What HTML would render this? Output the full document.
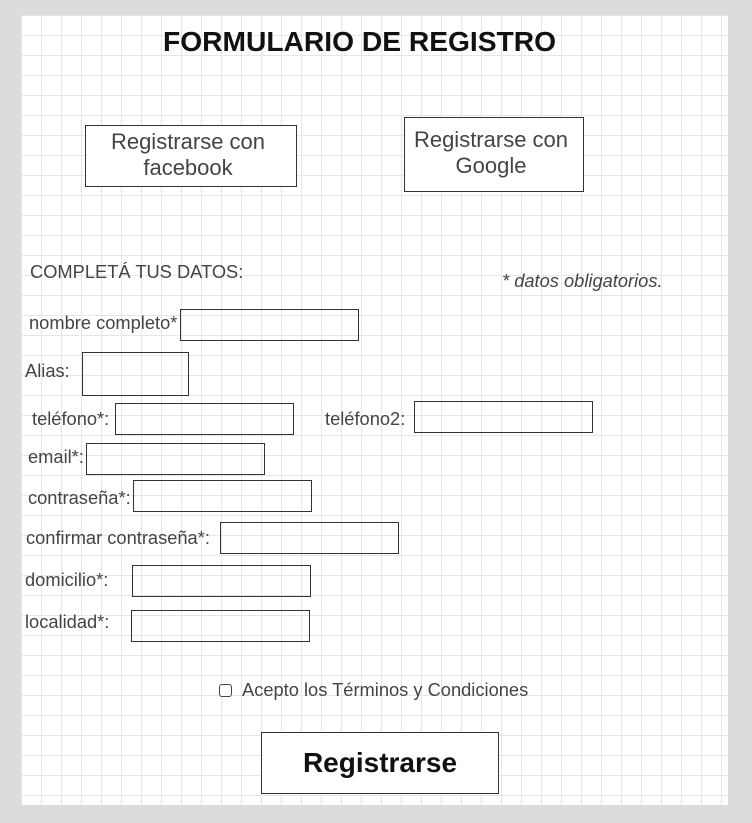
<!DOCTYPE html>
<html><head><meta charset="utf-8"><style>
body{margin:0;width:752px;height:823px;background:#dcdcdc;position:relative;overflow:hidden;font-family:"Liberation Sans",sans-serif;color:#444}
#p{position:absolute;left:21px;top:15px;width:707px;height:790px;background-color:#fff;
background-image:linear-gradient(to right,#e6e6e6 1px,transparent 1px),linear-gradient(to bottom,#e6e6e6 1px,transparent 1px);
background-size:20px 20px;background-position:0 0}
.t{position:absolute;font-size:18.3px;white-space:nowrap;line-height:20px}
.b{position:absolute;border:1px solid #333;background:transparent;box-sizing:border-box}
.c{position:absolute;text-align:center;font-size:22px;line-height:26px;color:#444;border:1px solid #333;box-sizing:border-box;background:#fff}
</style></head><body>
<div id="p"></div>
<div class="t" style="left:163px;top:26px;font-size:28.2px;line-height:30px;font-weight:bold;color:#111">FORMULARIO DE REGISTRO</div>
<div class="c" style="left:85px;top:125px;width:212px;height:62px;padding-top:3px;padding-right:6px">Registrarse con<br>facebook</div>
<div class="c" style="left:404px;top:117px;width:180px;height:75px;padding-top:9px;padding-right:6px">Registrarse con<br>Google</div>
<div class="t" style="left:30px;top:262px">COMPLETÁ TUS DATOS:</div>
<div class="t" style="left:502px;top:271px;font-style:italic">* datos obligatorios.</div>
<div class="t" style="left:29px;top:313px">nombre completo*</div><div class="b" style="left:180px;top:309px;width:179px;height:32px"></div>
<div class="t" style="left:25px;top:361px">Alias:</div><div class="b" style="left:82px;top:352px;width:107px;height:44px"></div>
<div class="t" style="left:32px;top:409px">teléfono*:</div><div class="b" style="left:115px;top:403px;width:179px;height:32px"></div>
<div class="t" style="left:325px;top:409px">teléfono2:</div><div class="b" style="left:414px;top:401px;width:179px;height:32px"></div>
<div class="t" style="left:28px;top:447px">email*:</div><div class="b" style="left:86px;top:443px;width:179px;height:32px"></div>
<div class="t" style="left:28px;top:488px">contraseña*:</div><div class="b" style="left:133px;top:480px;width:179px;height:32px"></div>
<div class="t" style="left:26px;top:528px">confirmar contraseña*:</div><div class="b" style="left:220px;top:522px;width:179px;height:32px"></div>
<div class="t" style="left:25px;top:570px">domicilio*:</div><div class="b" style="left:132px;top:565px;width:179px;height:32px"></div>
<div class="t" style="left:25px;top:612px">localidad*:</div><div class="b" style="left:131px;top:610px;width:179px;height:32px"></div>
<div style="position:absolute;left:219px;top:684px;width:13px;height:13px;border:1px solid #444;border-radius:3px;background:#fff;box-sizing:border-box"></div>
<div class="t" style="left:242px;top:680px">Acepto los Términos y Condiciones</div>
<div class="c" style="left:261px;top:732px;width:238px;height:62px;font-size:28px;line-height:60px;font-weight:bold;color:#111">Registrarse</div>
</body></html>
